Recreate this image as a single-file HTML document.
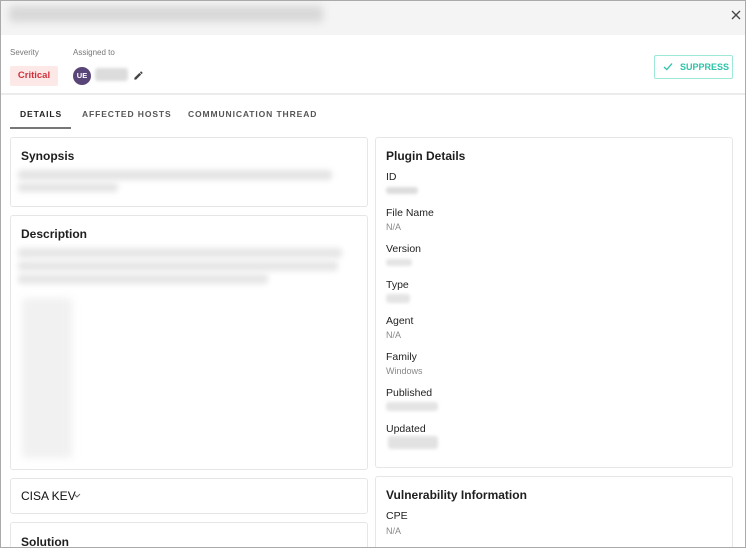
<!DOCTYPE html>
<html><head><meta charset="utf-8"><style>
*{box-sizing:border-box;margin:0;padding:0}
html,body{width:746px;height:548px;overflow:hidden}
body{background:#fff;font-family:"Liberation Sans",Arial,sans-serif;color:#222;position:relative}
#wrap{position:absolute;left:0;top:0;width:746px;height:548px;overflow:hidden}
.frame{position:absolute;left:0;top:0;width:746px;height:548px;border:1px solid #aaa;pointer-events:none;z-index:10}
.abs{position:absolute}
.blur{position:absolute;background:#dcdcdc;filter:blur(3px);border-radius:3px}
.card{position:absolute;border:1px solid #e6e6e6;border-radius:3px;background:#fff}
.h{position:absolute;font-size:12px;font-weight:bold;color:#1e1e1e}
.lbl{position:absolute;font-size:10.5px;color:#222}
.val{position:absolute;font-size:9px;color:#888}
</style></head><body><div id="wrap">
<div class="frame"></div>
<div class="abs" style="left:0;top:0;width:746px;height:35px;background:#f4f4f4"></div>
<div class="blur" style="left:9px;top:6px;width:314px;height:16px;background:#d8d8d8;filter:blur(4px)"></div>
<svg class="abs" style="left:731px;top:10px" width="10" height="10" viewBox="0 0 10 10"><path d="M1 1L9 9M9 1L1 9" stroke="#444" stroke-width="1.3"/></svg>
<div class="abs" style="left:10px;top:48px;font-size:8px;color:#777">Severity</div>
<div class="abs" style="left:73px;top:48px;font-size:8px;color:#777">Assigned to</div>
<div class="abs" style="left:10px;top:66px;width:48px;height:20px;background:#fde8e8;border-radius:2px;color:#d0313a;font-size:9.5px;font-weight:bold;text-align:center;line-height:20px">Critical</div>
<div class="abs" style="left:73px;top:67px;width:18px;height:18px;border-radius:50%;background:#5a4578;color:#fff;font-size:7.5px;font-weight:bold;text-align:center;line-height:18px">UE</div>
<div class="blur" style="left:95px;top:68px;width:33px;height:13px;filter:blur(1.5px)"></div>
<svg class="abs" style="left:133px;top:70px" width="11" height="11" viewBox="0 0 24 24"><path d="M3 17.25V21h3.75L17.81 9.94l-3.75-3.75L3 17.25zM20.71 7.04a1 1 0 000-1.41l-2.34-2.34a1 1 0 00-1.41 0l-1.83 1.83 3.75 3.75 1.83-1.83z" fill="#444"/></svg>
<div class="abs" style="left:654px;top:55px;width:79px;height:24px;border:1px solid #9ee8d8;border-radius:2px;color:#2cc3a8;font-size:9px;font-weight:bold;line-height:22px;padding-left:25px">SUPPRESS</div>
<svg class="abs" style="left:663px;top:62px" width="10" height="9" viewBox="0 0 10 9"><path d="M1 5L3.8 7.6L9 1.5" stroke="#2cc3a8" stroke-width="1.3" fill="none"/></svg>
<div class="abs" style="left:0;top:93px;width:746px;height:2px;background:#ececec"></div>
<div class="abs" style="left:20px;top:109px;font-size:8.5px;font-weight:bold;letter-spacing:0.9px;color:#222">DETAILS</div>
<div class="abs" style="left:82px;top:109px;font-size:8.5px;font-weight:bold;letter-spacing:0.9px;color:#555">AFFECTED HOSTS</div>
<div class="abs" style="left:188px;top:109px;font-size:8.5px;font-weight:bold;letter-spacing:0.9px;color:#555">COMMUNICATION THREAD</div>
<div class="abs" style="left:10px;top:127px;width:61px;height:2px;background:#777"></div>

<div class="card" style="left:10px;top:137px;width:358px;height:70px"></div>
<div class="h" style="left:21px;top:149px">Synopsis</div>
<div class="blur" style="left:18px;top:170px;width:314px;height:10px;background:#e4e4e4"></div>
<div class="blur" style="left:18px;top:183px;width:100px;height:9px;background:#e4e4e4"></div>

<div class="card" style="left:10px;top:215px;width:358px;height:255px"></div>
<div class="h" style="left:21px;top:227px">Description</div>
<div class="blur" style="left:18px;top:248px;width:324px;height:10px;background:#e6e6e6"></div>
<div class="blur" style="left:18px;top:261px;width:320px;height:10px;background:#e6e6e6"></div>
<div class="blur" style="left:18px;top:274px;width:250px;height:10px;background:#e6e6e6"></div>
<div class="blur" style="left:22px;top:298px;width:50px;height:160px;background:#f1f1f1;filter:blur(4px)"></div>

<div class="card" style="left:10px;top:478px;width:358px;height:36px"></div>
<div class="abs" style="left:21px;top:489px;font-size:12px;color:#111">CISA KEV</div>
<svg class="abs" style="left:73px;top:493px" width="8" height="6" viewBox="0 0 8 6"><path d="M1 1L4 4L7 1" stroke="#666" stroke-width="1" fill="none"/></svg>

<div class="card" style="left:10px;top:522px;width:358px;height:40px"></div>
<div class="h" style="left:21px;top:535px">Solution</div>

<div class="card" style="left:375px;top:137px;width:358px;height:331px"></div>
<div class="h" style="left:386px;top:149px">Plugin Details</div>
<div class="lbl" style="left:386px;top:171px">ID</div>
<div class="blur" style="left:386px;top:187px;width:32px;height:7px;filter:blur(1.5px)"></div>
<div class="lbl" style="left:386px;top:207px">File Name</div>
<div class="val" style="left:386px;top:222px">N/A</div>
<div class="lbl" style="left:386px;top:243px">Version</div>
<div class="blur" style="left:386px;top:259px;width:26px;height:7px;filter:blur(1.5px);background:#e4e4e4"></div>
<div class="lbl" style="left:386px;top:279px">Type</div>
<div class="blur" style="left:386px;top:294px;width:24px;height:9px;filter:blur(1.5px);background:#e4e4e4"></div>
<div class="lbl" style="left:386px;top:315px">Agent</div>
<div class="val" style="left:386px;top:330px">N/A</div>
<div class="lbl" style="left:386px;top:351px">Family</div>
<div class="val" style="left:386px;top:366px">Windows</div>
<div class="lbl" style="left:386px;top:387px">Published</div>
<div class="blur" style="left:386px;top:402px;width:52px;height:9px;filter:blur(1.5px);background:#e4e4e4"></div>
<div class="lbl" style="left:386px;top:423px">Updated</div>
<div class="blur" style="left:388px;top:436px;width:50px;height:13px;filter:blur(1.5px);background:#e2e2e2"></div>

<div class="card" style="left:375px;top:476px;width:358px;height:90px"></div>
<div class="h" style="left:386px;top:488px">Vulnerability Information</div>
<div class="lbl" style="left:386px;top:510px">CPE</div>
<div class="val" style="left:386px;top:526px">N/A</div>
</div></body></html>
